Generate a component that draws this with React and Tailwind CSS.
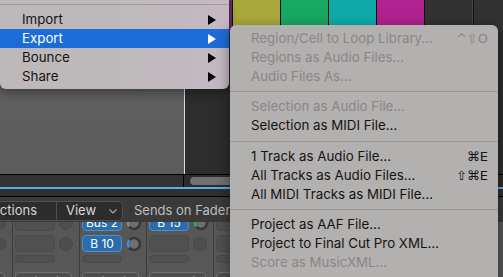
import React from "react";

const FILE_ITEMS = [
  { label: "Import" },
  { label: "Export", active: true },
  { label: "Bounce" },
  { label: "Share" },
];

const EXPORT_GROUPS = [
  [
    { label: "Region/Cell to Loop Library…", shortcut: "^⇧O", disabled: true },
    { label: "Regions as Audio Files…", disabled: true },
    { label: "Audio Files As…", disabled: true },
  ],
  [
    { label: "Selection as Audio File…", disabled: true },
    { label: "Selection as MIDI File…" },
  ],
  [
    { label: "1 Track as Audio File…", shortcut: "⌘E" },
    { label: "All Tracks as Audio Files…", shortcut: "⇧⌘E" },
    { label: "All MIDI Tracks as MIDI File…" },
  ],
  [
    { label: "Project as AAF File…" },
    { label: "Project to Final Cut Pro XML…" },
    { label: "Score as MusicXML…", disabled: true },
  ],
];

const STRIPS = [
  { a: null, b: null, out: "St Out" },
  { a: { label: "Bus 2", arc: "#8a8a8a" }, b: { label: "B 10", arc: "#3d8fe0" }, out: "St Out" },
  { a: { label: "B 15", arc: "#3fae5a" }, b: null, out: "No Out" },
  { a: null, b: null, out: "St Out" },
];

function Arrow({ white }) {
  return (
    <svg width="8" height="10" viewBox="0 0 8 10" className={white ? "fill-white" : "fill-black"}>
      <path d="M0 0 L8 5 L0 10 Z" />
    </svg>
  );
}

function Chevron() {
  return (
    <svg width="8" height="5" viewBox="0 0 8 5" fill="none" stroke="#a8a8a8" strokeWidth="1.1">
      <path d="M0.5 0.5 L4 4 L7.5 0.5" />
    </svg>
  );
}

function Knob({ arc }) {
  if (!arc) {
    return <div className="w-[14px] h-[14px] rounded-full bg-[#4e4e4e] border border-[#484848]" />;
  }
  return (
    <svg width="16" height="16" viewBox="0 0 16 16">
      <circle cx="8" cy="8" r="6" fill="#6f6f6f" stroke="#383838" strokeWidth="2.6" />
      <path d="M3.2 11.6 A6 6 0 0 1 3.4 4.2" fill="none" stroke={arc} strokeWidth="2.6" />
    </svg>
  );
}

function Slot({ send }) {
  return (
    <div className="flex items-center gap-[4px] h-[17px]">
      {send ? (
        <div className="w-[40px] h-[17px] rounded-[4px] bg-[#2b6cab] border border-[#4a8fd0] flex items-center justify-center text-[12px] text-white">
          {send.label}
        </div>
      ) : (
        <div className="w-[40px] h-[17px] rounded-[4px] bg-[#505050] border border-[#4a4a4a]" />
      )}
      <Knob arc={send ? send.arc : null} />
    </div>
  );
}

function Strip({ strip, className }) {
  return (
    <div className={"w-[67px] shrink-0 border-l border-[#3c3c3c] pl-[2px] flex flex-col " + (className || "")}>
      <Slot send={strip.a} />
      <div className="h-[4px]" />
      <Slot send={strip.b} />
      <div className="h-[3px]" />
      <div className="w-[40px] h-[8px] rounded-[4px] bg-[#505050] border border-[#4a4a4a]" />
      <div className="h-[9px]" />
      <div className="w-[57px] h-[18px] rounded-[4px] bg-[#4e4e4e] border border-[#727272] text-[11px] text-[#e0e0e0] text-center leading-[16px]">
        {strip.out}
      </div>
    </div>
  );
}

function MenuRow({ item }) {
  const color = item.disabled ? "text-[#8a8686]" : "text-[#141414]";
  return (
    <div className="h-[19px] flex items-center pl-[21px] pr-[10px]">
      <span className={"flex-1 " + color}>{item.label}</span>
      {item.shortcut && (
        <span className={"font-['DejaVu_Sans',sans-serif] text-[13px] " + color}>{item.shortcut}</span>
      )}
    </div>
  );
}

export default function App() {
  return (
    <div className="relative w-[503px] h-[277px] overflow-hidden bg-[#2e2e2e] flex flex-col font-['Inter','Liberation_Sans',sans-serif] text-[13.3px]">
      {/* Tracks area */}
      <div className="h-[174px] flex shrink-0">
        <div className="w-[185px] bg-gradient-to-b from-[#626262] to-[#5c5c5c] border-r border-[#d9d9d9]" />
        <div className="flex-1 flex flex-col bg-[#2d2d2d]">
          <div className="h-[32px] flex gap-[1px] bg-[#111]">
            <div className="w-[43px] bg-[#2d2d2d]" />
            <div className="w-[3px] bg-[#6b2c62]" />
            <div className="w-[47px] bg-[#a9a83c]" />
            <div className="w-[47px] bg-[#17a862]" />
            <div className="w-[47px] bg-[#0fa9a9]" />
            <div className="w-[47px] bg-[#b0228f]" />
            <div className="w-[48px] bg-[#323232] border-r border-[#474747]" />
            <div className="flex-1 bg-[#323232]" />
          </div>
        </div>
      </div>

      {/* Scroller bar */}
      <div className="h-[13px] border-t border-black flex shrink-0 bg-[#2c2c2c]">
        <div className="w-[184px] bg-[#333] border-r border-black" />
        <div className="flex-1 flex items-center pl-[6px]">
          <div className="w-[90px] h-[8px] rounded-full bg-[#707070]" />
        </div>
      </div>
      <div className="h-[2px] bg-[#5aaee6] shrink-0" />
      <div className="h-[8px] bg-[#2f2f2f] border-b border-black shrink-0" />

      {/* Mixer toolbar */}
      <div className="h-[25px] bg-[#3a3a3a] flex items-end pb-[1px] shrink-0">
        <div className="h-[20px] flex rounded-r-[5px] bg-[#2c2c2c] border border-l-0 border-[#505050] text-[#d6d6d6] text-[13px]">
          <div className="w-[57px] flex items-center justify-end gap-[11px] pr-[8px] border-r border-[#505050] overflow-hidden">
            <span className="shrink-0">Functions</span>
            <Chevron />
          </div>
          <div className="w-[65px] flex items-center pl-[9px] gap-[13px]">
            <span>View</span>
            <Chevron />
          </div>
        </div>
        <div className="ml-[11px] w-[96px] h-[20px] flex items-center overflow-hidden">
          <span className="text-[#bdbdbd] text-[13px] whitespace-nowrap">Sends on Faders</span>
        </div>
      </div>

      {/* Mixer strips */}
      <div className="flex-1 bg-[#575757] overflow-hidden">
        <div className="flex -mt-[8px]">
          <Strip strip={STRIPS[0]} className="-ml-[55px]" />
          {STRIPS.map((s, i) => (
            <Strip key={i} strip={s} />
          ))}
        </div>
      </div>

      {/* File menu (partial) */}
      <div className="absolute left-0 top-[-2px] w-[229px] rounded-b-[6px] bg-gradient-to-r from-[#bdb9ba] via-[#bdb9ba] to-[#c5b8c3] text-[#141414] shadow-[0_4px_10px_rgba(0,0,0,0.35)] pb-[3px]">
        <div className="h-[12px] flex items-center">
          <div className="w-full h-[1px] bg-[#a29e9e]" />
        </div>
        {FILE_ITEMS.map((item) => (
          <div
            key={item.label}
            className={
              "h-[19px] flex items-center pl-[22px] pr-[13px] " + (item.active ? "bg-[#1d6bd7] text-white" : "")
            }
          >
            <span className="flex-1">{item.label}</span>
            <Arrow white={item.active} />
          </div>
        ))}
      </div>

      {/* Export submenu */}
      <div className="absolute left-[230px] top-[25px] w-[268px] h-[270px] rounded-t-[6px] bg-[#b3b0b0] shadow-[0_4px_14px_rgba(0,0,0,0.45)] pt-[4px]">
        {EXPORT_GROUPS.map((group, gi) => (
          <div key={gi}>
            {gi > 0 && (
              <div className="h-[11.5px] flex items-center">
                <div className="w-full h-[1px] bg-[#999595]" />
              </div>
            )}
            {group.map((item) => (
              <MenuRow key={item.label} item={item} />
            ))}
          </div>
        ))}
      </div>
    </div>
  );
}
